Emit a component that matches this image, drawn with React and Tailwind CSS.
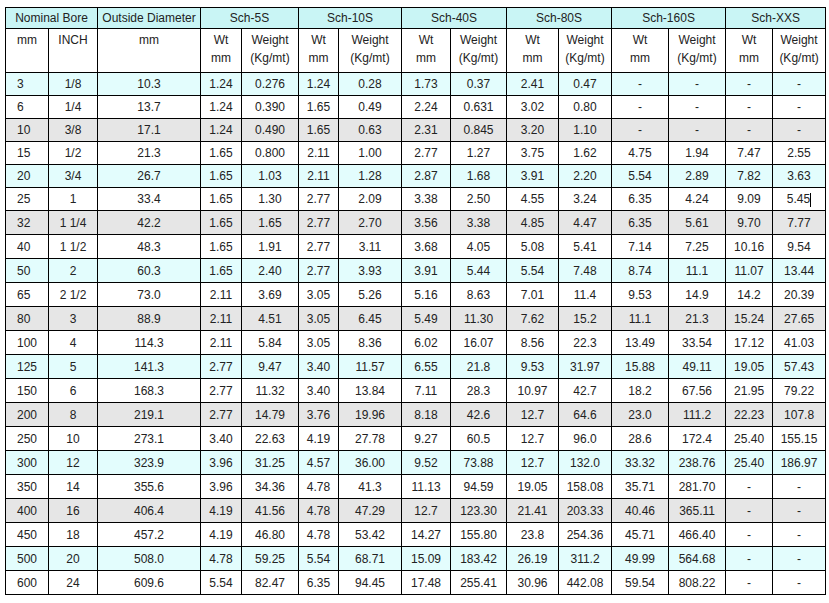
import React from 'react';

const schedules = ['Sch-5S', 'Sch-10S', 'Sch-40S', 'Sch-80S', 'Sch-160S', 'Sch-XXS'];

// [mm, inch, od, 5S wt, 5S kg, 10S wt, 10S kg, 40S wt, 40S kg, 80S wt, 80S kg, 160S wt, 160S kg, XXS wt, XXS kg]
const rows = [
  ['3', '1/8', '10.3', '1.24', '0.276', '1.24', '0.28', '1.73', '0.37', '2.41', '0.47', '-', '-', '-', '-'],
  ['6', '1/4', '13.7', '1.24', '0.390', '1.65', '0.49', '2.24', '0.631', '3.02', '0.80', '-', '-', '-', '-'],
  ['10', '3/8', '17.1', '1.24', '0.490', '1.65', '0.63', '2.31', '0.845', '3.20', '1.10', '-', '-', '-', '-'],
  ['15', '1/2', '21.3', '1.65', '0.800', '2.11', '1.00', '2.77', '1.27', '3.75', '1.62', '4.75', '1.94', '7.47', '2.55'],
  ['20', '3/4', '26.7', '1.65', '1.03', '2.11', '1.28', '2.87', '1.68', '3.91', '2.20', '5.54', '2.89', '7.82', '3.63'],
  ['25', '1', '33.4', '1.65', '1.30', '2.77', '2.09', '3.38', '2.50', '4.55', '3.24', '6.35', '4.24', '9.09', '5.45'],
  ['32', '1 1/4', '42.2', '1.65', '1.65', '2.77', '2.70', '3.56', '3.38', '4.85', '4.47', '6.35', '5.61', '9.70', '7.77'],
  ['40', '1 1/2', '48.3', '1.65', '1.91', '2.77', '3.11', '3.68', '4.05', '5.08', '5.41', '7.14', '7.25', '10.16', '9.54'],
  ['50', '2', '60.3', '1.65', '2.40', '2.77', '3.93', '3.91', '5.44', '5.54', '7.48', '8.74', '11.1', '11.07', '13.44'],
  ['65', '2 1/2', '73.0', '2.11', '3.69', '3.05', '5.26', '5.16', '8.63', '7.01', '11.4', '9.53', '14.9', '14.2', '20.39'],
  ['80', '3', '88.9', '2.11', '4.51', '3.05', '6.45', '5.49', '11.30', '7.62', '15.2', '11.1', '21.3', '15.24', '27.65'],
  ['100', '4', '114.3', '2.11', '5.84', '3.05', '8.36', '6.02', '16.07', '8.56', '22.3', '13.49', '33.54', '17.12', '41.03'],
  ['125', '5', '141.3', '2.77', '9.47', '3.40', '11.57', '6.55', '21.8', '9.53', '31.97', '15.88', '49.11', '19.05', '57.43'],
  ['150', '6', '168.3', '2.77', '11.32', '3.40', '13.84', '7.11', '28.3', '10.97', '42.7', '18.2', '67.56', '21.95', '79.22'],
  ['200', '8', '219.1', '2.77', '14.79', '3.76', '19.96', '8.18', '42.6', '12.7', '64.6', '23.0', '111.2', '22.23', '107.8'],
  ['250', '10', '273.1', '3.40', '22.63', '4.19', '27.78', '9.27', '60.5', '12.7', '96.0', '28.6', '172.4', '25.40', '155.15'],
  ['300', '12', '323.9', '3.96', '31.25', '4.57', '36.00', '9.52', '73.88', '12.7', '132.0', '33.32', '238.76', '25.40', '186.97'],
  ['350', '14', '355.6', '3.96', '34.36', '4.78', '41.3', '11.13', '94.59', '19.05', '158.08', '35.71', '281.70', '-', '-'],
  ['400', '16', '406.4', '4.19', '41.56', '4.78', '47.29', '12.7', '123.30', '21.41', '203.33', '40.46', '365.11', '-', '-'],
  ['450', '18', '457.2', '4.19', '46.80', '4.78', '53.42', '14.27', '155.80', '23.8', '254.36', '45.71', '466.40', '-', '-'],
  ['500', '20', '508.0', '4.78', '59.25', '5.54', '68.71', '15.09', '183.42', '26.19', '311.2', '49.99', '564.68', '-', '-'],
  ['600', '24', '609.6', '5.54', '82.47', '6.35', '94.45', '17.48', '255.41', '30.96', '442.08', '59.54', '808.22', '-', '-'],
];

const colWidths = [43, 49, 103, 41, 57, 40, 63, 49, 56, 52, 53, 57, 57, 47, 53];

// row shading repeats cyan, white, grey, white
const shade = ['bg-[#e3fdfd]', 'bg-white', 'bg-[#e6e6e6]', 'bg-white'];

export default function App() {
  return (
    <div className="min-h-screen bg-white pl-[5px] pt-[7px] text-[12px] text-[#222]" style={{ fontFamily: '"Liberation Sans", Arial, sans-serif' }}>
      <table className="table-fixed border-collapse border border-black" style={{ width: 820 }}>
        <colgroup>
          {colWidths.map((w, i) => (
            <col key={i} style={{ width: w }} />
          ))}
        </colgroup>
        <thead>
          <tr className="h-[21px] bg-[#c9f5f5]">
            <th colSpan={2} className="border border-black font-normal text-center align-middle">Nominal Bore</th>
            <th className="border border-black font-normal text-center align-middle whitespace-nowrap">Outside Diameter</th>
            {schedules.map((s) => (
              <th key={s} colSpan={2} className="border border-black font-normal text-center align-middle">{s}</th>
            ))}
          </tr>
          <tr className="h-[44px] bg-white leading-[18px]">
            <th className="border border-black font-normal text-center align-top pt-[2px]">mm</th>
            <th className="border border-black font-normal text-center align-top pt-[2px]">INCH</th>
            <th className="border border-black font-normal text-center align-top pt-[2px]">mm</th>
            {schedules.map((s) => (
              <React.Fragment key={s}>
                <th className="border border-black font-normal text-center align-top pt-[2px]">Wt<br />mm</th>
                <th className="border border-black font-normal text-center align-top pt-[2px] whitespace-nowrap">Weight<br />(Kg/mt)</th>
              </React.Fragment>
            ))}
          </tr>
        </thead>
        <tbody>
          {rows.map((r, i) => (
            <tr key={r[0]} className={`${i < 6 ? 'h-[23px]' : 'h-[24px]'} ${shade[i % 4]}`}>
              {r.map((v, j) => (
                <td key={j} className={`border border-black align-middle whitespace-nowrap ${j === 0 ? 'text-left pl-[11px]' : 'text-center'}`}>
                  {v}
                  {i === 5 && j === 14 && <span className="inline-block w-px h-[14px] bg-black align-middle" />}
                </td>
              ))}
            </tr>
          ))}
        </tbody>
      </table>
    </div>
  );
}
